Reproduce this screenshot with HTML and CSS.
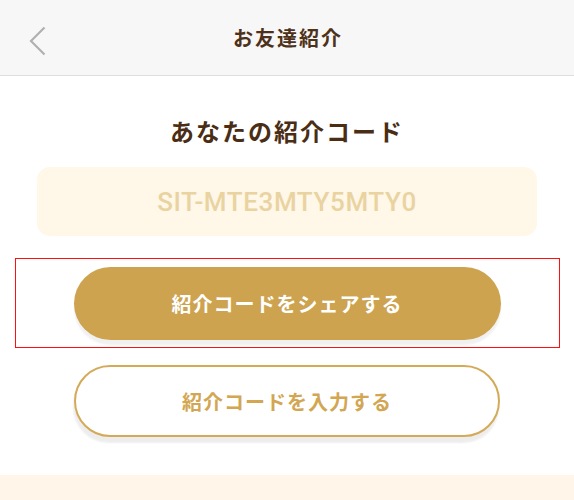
FILE: index.html
```html
<!DOCTYPE html>
<html lang="ja">
<head>
<meta charset="utf-8">
<link rel="stylesheet" href="styles.css">
</head>
<body>
<header class="nav">
  <svg class="back" width="20" height="32" viewBox="0 0 20 32"><polyline points="15.5,2.5 2,16 15.5,29.5" fill="none" stroke="#b0b0b0" stroke-width="2.2"/></svg>
  <h1 class="nav-title">お友達紹介</h1>
</header>
<main class="main">
  <h2 class="heading">あなたの紹介コード</h2>
  <div class="code-box">SIT-MTE3MTY5MTY0</div>
  <div class="highlight">
    <button class="btn btn-primary">紹介コードをシェアする</button>
  </div>
  <button class="btn btn-outline">紹介コードを入力する</button>
</main>
<div class="band"></div>
</body>
</html>
```
FILE: styles.css
```css
* { box-sizing: border-box; }
html, body { margin: 0; padding: 0; background: #fff; }
body {
  font-family: "Noto Sans CJK JP", "Noto Sans", sans-serif;
  width: 574px;
  height: 500px;
  overflow: hidden;
}
.nav {
  height: 76px;
  background: #f7f7f7;
  border-bottom: 1px solid #dedede;
  display: flex;
  align-items: center;
  justify-content: center;
  position: relative;
}
.back {
  position: absolute;
  left: 29px;
  top: 25px;
}
.nav-title {
  margin: 0;
  font-size: 20px;
  font-weight: 700;
  letter-spacing: 2px;
  color: #4e3119;
  line-height: 28px;
  padding-top: 1px;
  padding-left: 2px;
}
.main {
  display: flex;
  flex-direction: column;
  align-items: center;
  padding-top: 38px;
}
.heading {
  margin: 0;
  font-size: 24px;
  line-height: 34px;
  font-weight: 700;
  letter-spacing: 2px;
  color: #4a2d15;
}
.code-box {
  margin-top: 19px;
  width: 500px;
  height: 69px;
  border-radius: 13px;
  background: #fff7e8;
  color: #e9d3a1;
  font-family: Roboto, "Liberation Sans", Arial, sans-serif;
  font-weight: 500;
  font-size: 26px;
  letter-spacing: 0.6px;
  display: flex;
  align-items: center;
  justify-content: center;
  padding-top: 1px;
}
.highlight {
  margin-top: 22px;
  width: 545px;
  height: 90px;
  border: 1px solid #ff1010;
  display: flex;
  justify-content: center;
  padding-top: 8px;
}
.btn {
  font-family: "Noto Sans CJK JP", "Noto Sans", sans-serif;
  font-size: 20px;
  font-weight: 700;
  letter-spacing: 1px;
  border-radius: 40px;
  display: flex;
  align-items: center;
  justify-content: center;
  padding: 0;
}
.btn-primary {
  width: 427px;
  height: 73px;
  background: #cda350;
  color: #fff;
  border: none;
  box-shadow: 0 5px 2px rgba(0,0,0,0.06);
}
.btn-outline {
  margin-top: 17px;
  width: 426px;
  height: 72px;
  background: #fff;
  color: #d2a652;
  border: 2px solid #d4aa58;
  box-shadow: -1px 6px 2px rgba(0,0,0,0.07);
}
.band {
  position: absolute;
  left: 0;
  top: 475px;
  width: 574px;
  height: 25px;
  background: #fff6e9;
}
```
